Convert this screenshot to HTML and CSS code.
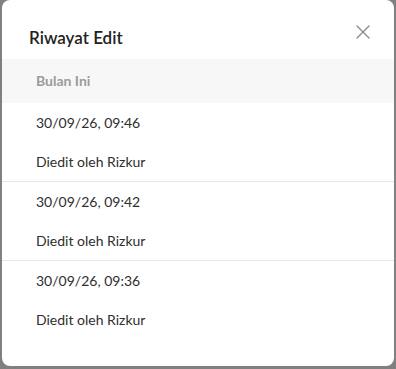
FILE: index.html
```html
<!DOCTYPE html>
<html lang="id">
<head>
  <meta charset="UTF-8" />
  <meta name="viewport" content="width=device-width, initial-scale=1.0"/>
  <title>Riwayat Edit</title>
  <link rel="stylesheet" href="styles.css">
</head>
<body>
  <div class="modal">
    <div class="modal-header">
      <h2 class="modal-title">Riwayat Edit</h2>
      <button class="close-btn" aria-label="Tutup">
        <svg width="14" height="14" viewBox="0 0 14 14">
          <path d="M1 1 L13 13 M13 1 L1 13" stroke="#8a8a8a" stroke-width="1.4" fill="none" stroke-linecap="round"/>
        </svg>
      </button>
    </div>
    <div class="section-title">Bulan Ini</div>
    <div class="history-list">
      <div class="history-item">
        <div class="history-date">30/09/26, 09:46</div>
        <div class="history-user">Diedit oleh Rizkur</div>
      </div>
      <div class="history-item">
        <div class="history-date">30/09/26, 09:42</div>
        <div class="history-user">Diedit oleh Rizkur</div>
      </div>
      <div class="history-item">
        <div class="history-date">30/09/26, 09:36</div>
        <div class="history-user">Diedit oleh Rizkur</div>
      </div>
    </div>
  </div>
</body>
</html>
```

FILE: styles.css
```css
body {
  margin: 0;
  font-family: Lato, "Noto Sans", sans-serif;
  background: #808080;
  height: 369px;
  overflow: hidden;
}

.modal {
  width: 392px;
  height: 366px;
  margin-left: 2px;
  background: white;
  border-radius: 8px;
  overflow: hidden;
}

.modal-header {
  display: flex;
  justify-content: space-between;
  align-items: flex-start;
  height: 59px;
  box-sizing: border-box;
  padding: 25px 24px 0 27px;
}

.modal-title {
  margin: 1px 0 0;
  font-size: 17px;
  line-height: 24px;
  font-weight: 600;
  color: #222;
}

.close-btn {
  background: none;
  border: none;
  padding: 0;
  width: 14px;
  height: 14px;
  cursor: pointer;
}

.close-btn svg {
  display: block;
}

.section-title {
  height: 44px;
  line-height: 44px;
  padding-left: 34px;
  background: #f7f7f7;
  font-size: 14px;
  font-weight: 700;
  color: #9b9b9b;
}

.history-item {
  padding-left: 34px;
  border-bottom: 1px solid #e8e8e8;
}

.history-item:last-child {
  border-bottom: none;
}

.history-date,
.history-user {
  height: 39px;
  line-height: 39px;
  font-size: 14px;
  color: #2e2e2e;
}
```
